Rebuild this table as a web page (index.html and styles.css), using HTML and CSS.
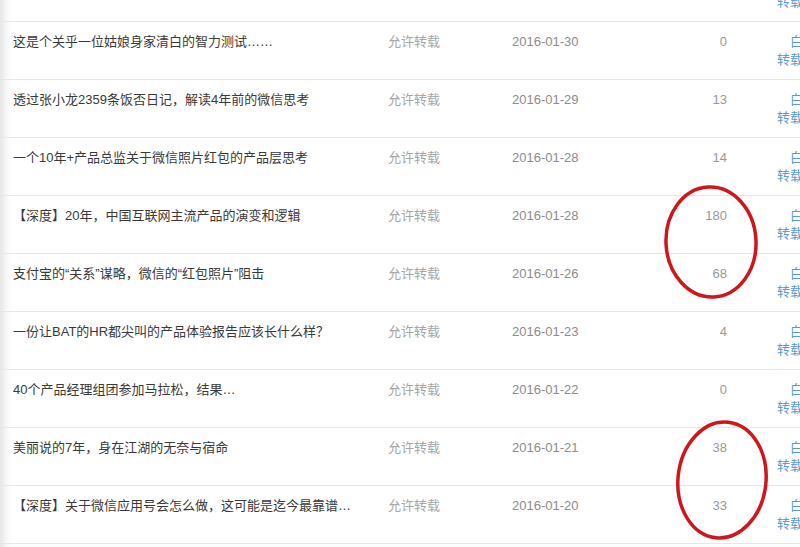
FILE: index.html
```html
<!DOCTYPE html>
<html lang="zh-CN">
<head>
    <meta charset="UTF-8">
    <meta name="viewport" content="width=device-width, initial-scale=1.0">
    <title>原创文章管理</title>
    <link rel="stylesheet" href="styles.css">
</head>
<body>
    <div class="page">
        <div class="list">
            <!-- row scrolled mostly out of view: only its links peek in -->
            <div class="row row-partial">
                <div class="title"></div>
                <div class="status"></div>
                <div class="date"></div>
                <div class="count"></div>
                <div class="ops"><a href="#">白名单</a><a href="#">转载设置</a></div>
            </div>
            <div class="row">
                <div class="title">这是个关乎一位姑娘身家清白的智力测试……</div>
                <div class="status">允许转载</div>
                <div class="date">2016-01-30</div>
                <div class="count">0</div>
                <div class="ops"><a href="#">白名单</a><a href="#">转载设置</a></div>
            </div>
            <div class="row">
                <div class="title">透过张小龙2359条饭否日记，解读4年前的微信思考</div>
                <div class="status">允许转载</div>
                <div class="date">2016-01-29</div>
                <div class="count">13</div>
                <div class="ops"><a href="#">白名单</a><a href="#">转载设置</a></div>
            </div>
            <div class="row">
                <div class="title">一个10年+产品总监关于微信照片红包的产品层思考</div>
                <div class="status">允许转载</div>
                <div class="date">2016-01-28</div>
                <div class="count">14</div>
                <div class="ops"><a href="#">白名单</a><a href="#">转载设置</a></div>
            </div>
            <div class="row">
                <div class="title">【深度】20年，中国互联网主流产品的演变和逻辑</div>
                <div class="status">允许转载</div>
                <div class="date">2016-01-28</div>
                <div class="count">180</div>
                <div class="ops"><a href="#">白名单</a><a href="#">转载设置</a></div>
            </div>
            <div class="row">
                <div class="title">支付宝的“关系”谋略，微信的“红包照片”阻击</div>
                <div class="status">允许转载</div>
                <div class="date">2016-01-26</div>
                <div class="count">68</div>
                <div class="ops"><a href="#">白名单</a><a href="#">转载设置</a></div>
            </div>
            <div class="row">
                <div class="title">一份让BAT的HR都尖叫的产品体验报告应该长什么样？</div>
                <div class="status">允许转载</div>
                <div class="date">2016-01-23</div>
                <div class="count">4</div>
                <div class="ops"><a href="#">白名单</a><a href="#">转载设置</a></div>
            </div>
            <div class="row">
                <div class="title">40个产品经理组团参加马拉松，结果…</div>
                <div class="status">允许转载</div>
                <div class="date">2016-01-22</div>
                <div class="count">0</div>
                <div class="ops"><a href="#">白名单</a><a href="#">转载设置</a></div>
            </div>
            <div class="row">
                <div class="title">美丽说的7年，身在江湖的无奈与宿命</div>
                <div class="status">允许转载</div>
                <div class="date">2016-01-21</div>
                <div class="count">38</div>
                <div class="ops"><a href="#">白名单</a><a href="#">转载设置</a></div>
            </div>
            <div class="row">
                <div class="title">【深度】关于微信应用号会怎么做，这可能是迄今最靠谱…</div>
                <div class="status">允许转载</div>
                <div class="date">2016-01-20</div>
                <div class="count">33</div>
                <div class="ops"><a href="#">白名单</a><a href="#">转载设置</a></div>
            </div>
        </div>

        <!-- hand-drawn marks over the read counts -->
        <svg class="marks" width="800" height="547" viewBox="0 0 800 547">
            <ellipse cx="711" cy="242" rx="45" ry="55" transform="rotate(-3 711 242)"></ellipse>
            <ellipse cx="722" cy="480" rx="44" ry="58" transform="rotate(6 722 480)"></ellipse>
        </svg>
    </div>
</body>
</html>
```

FILE: styles.css
```css
body {
    margin: 0;
    background-color: #fff;
    font-family: "Liberation Sans", "Noto Sans CJK SC", sans-serif;
    font-size: 13px;
    color: #333;
    overflow: hidden;
}
.page {
    position: relative;
    width: 800px;
    height: 547px;
    overflow: hidden;
    box-shadow: inset 12px 0 10px -8px rgba(0, 0, 0, 0.12);
}
.list {
    width: 840px;
    margin-top: -36px;
}
.row {
    display: grid;
    grid-template-columns: 375px 124px 128px 87px 102px;
    height: 58px;
    box-sizing: border-box;
    padding: 11px 0 0 13px;
    border-bottom: 1px solid #e7e7e7;
    line-height: 18px;
}
.title {
    color: #3a3a3a;
    white-space: nowrap;
}
.status {
    color: #a6a6a6;
}
.date {
    color: #8c8c8c;
}
.count {
    color: #999;
    text-align: right;
}
.ops {
    display: flex;
    flex-direction: column;
    align-items: flex-end;
}
.ops a {
    color: #5b9bd5;
    text-decoration: none;
}
.marks {
    position: absolute;
    top: 0;
    left: 0;
    pointer-events: none;
}
.marks ellipse {
    fill: none;
    stroke: #d0161c;
    stroke-width: 3.5;
}
```
